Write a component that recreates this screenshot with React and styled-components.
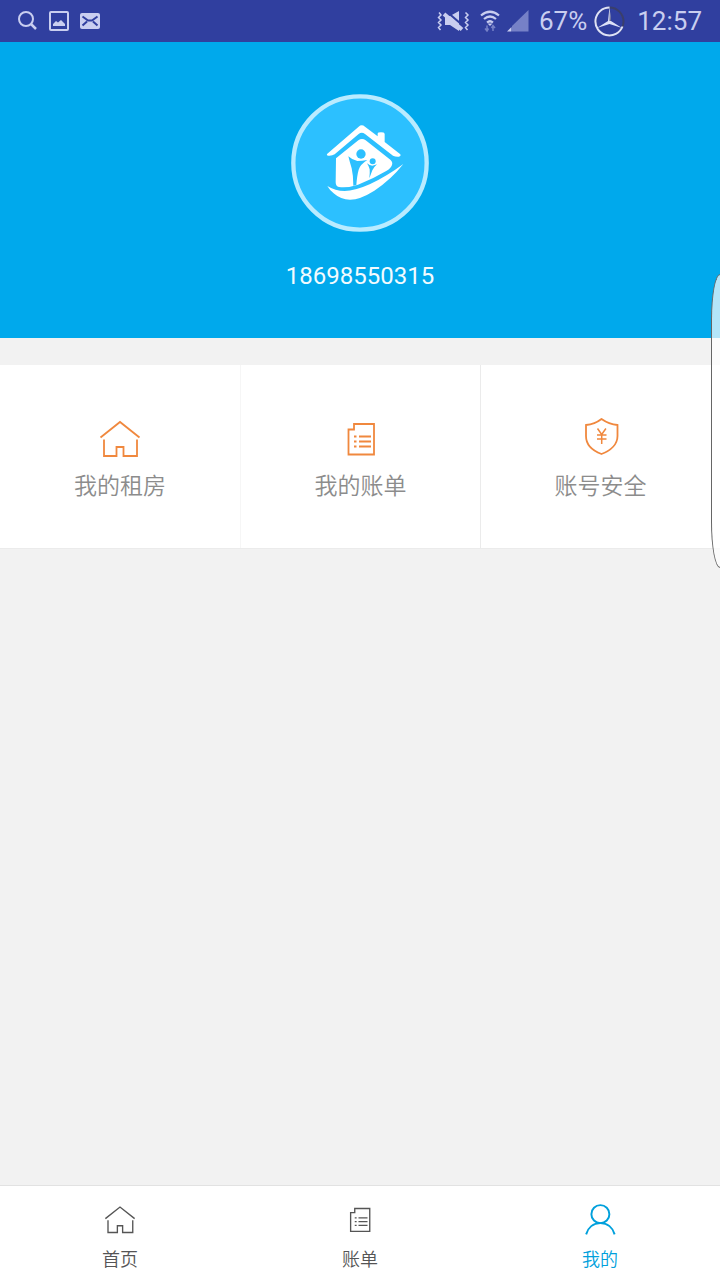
// React
import React from 'react';

// Styled Components
import styled, { createGlobalStyle } from 'styled-components';

const GlobalStyle = createGlobalStyle`
  * {
    box-sizing: border-box;
  }
  body {
    margin: 0;
    background: #f2f2f2;
    font-family: Roboto, "Noto Sans CJK SC", sans-serif;
  }
`;

const Page = styled.div`
  position: relative;
  display: flex;
  flex-direction: column;
  min-height: 100vh;
  overflow: hidden;
`;

const StatusBar = styled.div`
  display: flex;
  align-items: center;
  justify-content: space-between;
  height: 42px;
  padding: 0 18px;
  background: #303f9f;
  color: #c9cef0;
  font-size: 26px;
  line-height: 44px;
`;

const StatusGroup = styled.div`
  display: flex;
  align-items: center;
  gap: ${props => props.$gap}px;
`;

const Battery = styled.span`
  margin-left: 3px;
`;

const Clock = styled.time`
  margin-left: 5px;
`;

const Profile = styled.header`
  display: flex;
  flex-direction: column;
  align-items: center;
  gap: 28px;
  height: 296px;
  padding-top: 52px;
  background: #00a9ec;
`;

const Phone = styled.div`
  color: #f2fbff;
  font-size: 24px;
  line-height: 32px;
`;

const Tiles = styled.main`
  display: grid;
  grid-template-columns: repeat(3, 1fr);
  margin-top: 27px;
  background: #fff;
  border-bottom: 1px solid #ebebeb;
`;

const Tile = styled.button`
  display: flex;
  flex-direction: column;
  align-items: center;
  gap: 12px;
  height: 183px;
  padding: 53px 0 0;
  border: 0;
  border-left: 1px solid #ebebeb;
  background: none;
  color: #8c8c8c;
  font-family: inherit;
  font-size: 23px;
  font-weight: 350;
  line-height: 34px;

  &:first-child {
    border-left: 0;
  }
  &:nth-child(2) {
    border-left-color: #f6f6f6;
  }
`;

const TabBar = styled.nav`
  display: grid;
  grid-template-columns: repeat(3, 1fr);
  margin-top: auto;
  height: 95px;
  background: #fff;
  border-top: 1px solid #e2e2e2;
`;

const Tab = styled.a`
  display: flex;
  flex-direction: column;
  align-items: center;
  gap: 14px;
  padding-top: 18px;
  color: ${props => (props.$active ? '#00a0dc' : '#555')};
  font-size: 18px;
  font-weight: 350;
  line-height: 24px;
  text-decoration: none;
`;

const LineIcon = styled.svg`
  display: block;
  overflow: visible;
  fill: none;
  stroke: ${props => props.$color};
  stroke-width: ${props => props.$weight};
`;

// Handle of the slide-in panel, floats over the right edge of the screen
const EdgeHandle = styled.div`
  position: absolute;
  top: 274px;
  right: 0;
  width: 9px;
  height: 294px;
  border: 1px solid #666;
  border-right: 0;
  border-radius: 9px 0 0 9px / 46px 0 0 46px;
  background: rgba(255, 255, 255, 0.7);
`;

// Icons //
const HouseShape = () => (
  <>
    <path d="M.5 19.5 20 4l19.500 15.500" />
    <path d="M4 21.500V38h12.500v-9h7V38H37V21.500" />
  </>
);

const BillShape = () => (
  <>
    <path d="M13 6h20v30.500H7.500V11.500H13z" />
    <path d="M13 18.500h2.500M18 18.500h12M13 23.500h2.500M18 23.500h12M13 28.500h2.500M18 28.500h12" />
  </>
);

const ShieldShape = () => (
  <>
    <path d="M20.500 1C16 4.500 10.500 6.500 5 7v11c0 8 6 14.500 15.500 18C30 32.500 36.500 26 36.500 18V7C31 6.500 25.500 4.500 20.500 1z" />
    <path d="m16.500 10.500 4.200 6 4.200-6M16 17h9.500M16 21h9.500M20.700 16.500V26" strokeWidth="1.500" />
  </>
);

const UserShape = () => (
  <>
    <circle cx="20.500" cy="13.500" r="12" />
    <path d="M1.500 40.500C4 31.500 11 25.500 20.500 25.500S37 31.500 39.500 40.500" />
  </>
);

const SearchIcon = () => (
  <svg width="20" height="20" viewBox="0 0 20 20" fill="none" stroke="currentColor" strokeWidth="2">
    <circle cx="8" cy="8" r="7" />
    <path d="m13 13 5 5" strokeWidth="2.500" />
  </svg>
);

const PictureIcon = () => (
  <svg width="20" height="20" viewBox="0 0 20 20">
    <rect x="1" y="1" width="18" height="18" rx="1" fill="none" stroke="currentColor" strokeWidth="2" />
    <path d="M4 15v-2l3-3 2 1.500 3-2.500 4 4v2z" fill="currentColor" />
  </svg>
);

const MailIcon = () => (
  <svg width="20" height="16" viewBox="0 0 20 16">
    <rect width="20" height="16" rx="2" fill="currentColor" />
    <path d="M2.500 3.500 8 7.500h4l5.500-4M2.500 12.500 7 8.500M17.500 12.500 13 8.500" fill="none" stroke="#303f9f" strokeWidth="2" />
  </svg>
);

const MuteIcon = () => (
  <svg width="36" height="24" viewBox="0 0 36 24">
    <path d="M2 3.500 4 6 1.500 8.500 4 11l-2.500 2.500L4 16l-2.500 2.500 2 2.500M28.500 3.500 31 6l-2.500 2.500L31 11l-2.500 2.500L31 16l-2.500 2.500 2 2.500" fill="none" stroke="currentColor" strokeWidth="1.500" />
    <path d="M8 7h5l9-5v20l-9-6H8z" fill="currentColor" />
    <path d="m9 2 18 15.500" stroke="#303f9f" strokeWidth="2" />
    <path d="m7 5 18 15.500" stroke="currentColor" strokeWidth="4" />
  </svg>
);

const WifiIcon = () => (
  <svg width="20" height="22" viewBox="0 0 20 22">
    <path d="M1 5.500Q10-2 19 5.500M4 9Q10 4 16 9M7 12.500q3-2.500 6 0" fill="none" stroke="currentColor" strokeWidth="2.200" />
    <path d="m10 16-2.500-2.500h5z" fill="currentColor" />
    <path d="M7 15.500V21M13 21v-5.500M5 18.500l2 2.500 1.500-2.500M11.500 18l1.500-2.500 2 2.500" fill="none" stroke="#7681c7" strokeWidth="1.500" />
  </svg>
);

const SignalIcon = () => (
  <svg width="22" height="22" viewBox="0 0 22 22">
    <path d="M21.500 0v21.500H5V16z" fill="#7681c7" />
    <path d="M0 21.500h4.500V17z" fill="currentColor" />
  </svg>
);

const BatteryIcon = () => (
  <svg width="31" height="31" viewBox="0 0 31 31">
    <circle cx="15.500" cy="15.500" r="14" fill="none" stroke="#3a3f6b" strokeWidth="2" />
    <path d="M15.500 1.500a14 14 0 1 0 13 19" fill="none" stroke="#dde1f8" strokeWidth="2" />
    <path d="m15.500 1 1.500 14 11 7-12.500-4L3 22l11-7z" fill="#dde1f8" />
    <path d="m15.800 4 1.200 11-1.500 0z" fill="#555a83" />
  </svg>
);

const Logo = () => (
  <svg width="138" height="138" viewBox="33 28 414 414" role="img" aria-label="logo">
    <circle cx="240" cy="235" r="200" fill="#2cc0ff" stroke="#b9ebff" strokeWidth="13" />
    <g fill="#fff">
      <path d="M142 207 236 126q9-8 19 0l38 29v-8q0-4 10-4t11 4v25l46 36q5 5-3 8-10 1-18-3l-84-65q-10-7-19 0l-72 61q-8 5-19 4-7-1-3-6z" />
      <path d="M168 221 235 167q11-8 22 0l74 58q8 7 5 16-3 10-16 17-42 25-86 42-34 11-57 7-10-2-10-14z" />
      <path d="M142 304q24 15 52 15 30 0 75-20 51-24 101-61-37 47-87 80-43 27-73 27-28 0-49-19-13-11-19-22z" />
    </g>
    <g fill="#2cc0ff">
      <circle cx="243" cy="208" r="14" />
      <circle cx="278" cy="230" r="9" />
      <path d="M205 215q13 12 27 14 14 0 30-3-21 13-26 29-5 18-7 46l-9 2q0-30-5-52-6-20-10-36z" />
      <path d="M261 236q8 7 16 7 8-1 14-4-10 9-14 18-4 11-9 24 2-18 1-27-2-9-8-18z" />
    </g>
  </svg>
);

const tiles = [
  { label: '我的租房', shape: <HouseShape /> },
  { label: '我的账单', shape: <BillShape /> },
  { label: '账号安全', shape: <ShieldShape /> },
];

const tabs = [
  { label: '首页', shape: <HouseShape /> },
  { label: '账单', shape: <BillShape /> },
  { label: '我的', shape: <UserShape />, active: true },
];

const App = () => (
  <>
    <GlobalStyle />
    <Page>
      <StatusBar>
        <StatusGroup $gap={11}>
          <SearchIcon />
          <PictureIcon />
          <MailIcon />
        </StatusGroup>
        <StatusGroup $gap={7}>
          <MuteIcon />
          <WifiIcon />
          <SignalIcon />
          <Battery>67%</Battery>
          <BatteryIcon />
          <Clock>12:57</Clock>
        </StatusGroup>
      </StatusBar>

      <Profile>
        <Logo />
        <Phone>18698550315</Phone>
      </Profile>

      <Tiles>
        {tiles.map(tile => (
          <Tile key={tile.label} type="button">
            <LineIcon width="40" height="40" viewBox="0 0 40 40" $color="#f0883e" $weight={1.8}>
              {tile.shape}
            </LineIcon>
            {tile.label}
          </Tile>
        ))}
      </Tiles>

      <TabBar>
        {tabs.map(tab => (
          <Tab key={tab.label} href="#" $active={tab.active} aria-current={tab.active ? 'page' : undefined}>
            <LineIcon
              width="30"
              height="30"
              viewBox="0 0 40 40"
              $color={tab.active ? '#00a0dc' : '#555'}
              $weight={tab.active ? 2.6 : 1.8}
            >
              {tab.shape}
            </LineIcon>
            {tab.label}
          </Tab>
        ))}
      </TabBar>

      <EdgeHandle />
    </Page>
  </>
);

export default App;
